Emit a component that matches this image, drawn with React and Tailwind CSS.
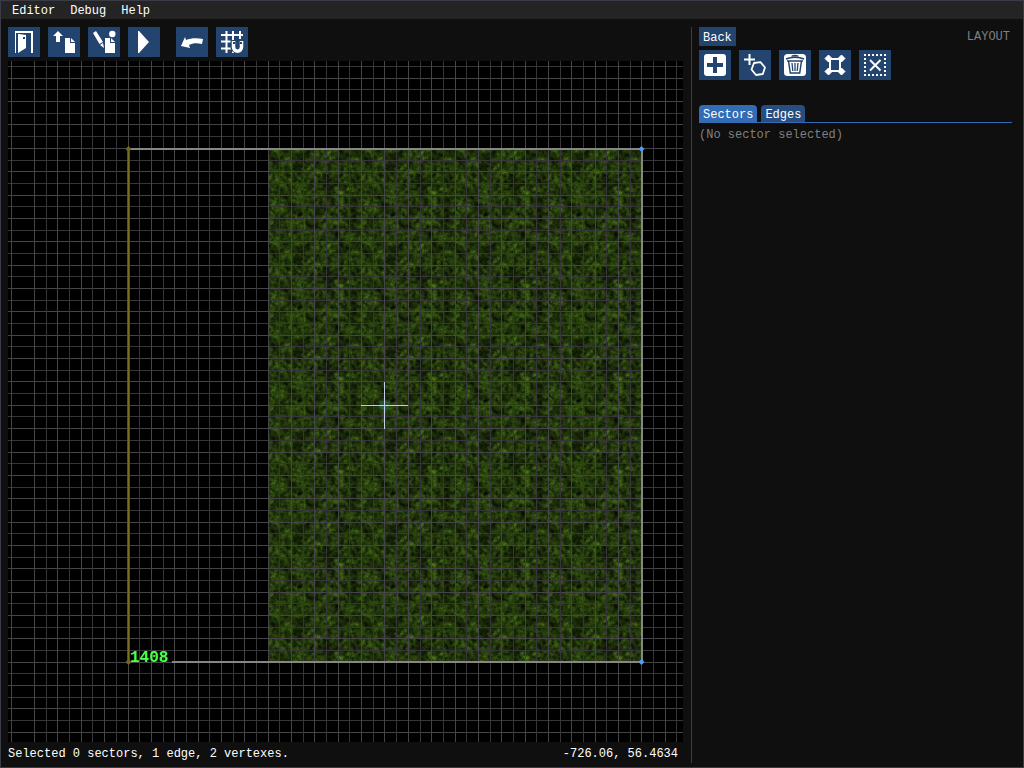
import React from "react";

const STEP = 11.68;
const CENTER_X = 376.98;
const CENTER_Y = 344.3;

const columns = Array.from({ length: 58 }, (_, i) => i - 32).filter((i) => i !== -31);
const rows = Array.from({ length: 58 }, (_, i) => i - 29);

const lineAt = (center, i) => Math.floor(center + i * STEP);
const lineColor = (i) => (i % 2 === 0 ? "#454547" : "#363638");

const icons = {
  exit: (
    <>
      <path d="M7 4h18v22h-2V6H8v20H7z" />
      <path d="M10 7h1l7 1v13l-8 5z" />
      <path d="M15 10h2v2h-2z" fill="#23446e" />
    </>
  ),
  open: (
    <>
      <path d="M10 4l5 5h-3v6H8V9H5z" />
      <path d="M17 11h5v5h5v10H17zM23 11l4 4h-4z" />
    </>
  ),
  edit: (
    <>
      <path d="M5 6l3-2 7 11-3.500 2zM12 18l3-2 1 5z" />
      <circle cx="24.300" cy="7" r="3.200" />
      <path d="M17 11h5v5h5v10H17zM23 11l4 4h-4z" />
    </>
  ),
  play: <path d="M10 4l1 0 10 11-10 11h-1z" />,
  undo: <path d="M5 19l4-9 1 3c5-2 11-2 17-1l-1 5c-5-1-9-1-13 1l1 3z" />,
  snap: (
    <>
      <path d="M9.500 4h2v22h-2zM16 4h2v10h-2zM23 4h2v8h-2zM5 7h22v2H5zM5 13.500h22v2H5zM5 20.500h10v2H5zM16 24h2v2h-2z" />
      <path d="M14.500 13h13v7c0 8-13 8-13 0z" fill="#23446e" />
      <path d="M17.500 14v6c0 5.500 8 5.500 8 0v-6" fill="none" stroke="#fff" strokeWidth="3.500" />
      <path d="M17 15h2v2h-2zM24 15h2v2h-2z" fill="#23446e" />
    </>
  ),
  add: (
    <>
      <rect x="5" y="4" width="22" height="22" rx="3" />
      <path d="M14 7h4v6h6v4h-6v6h-4v-6H8v-4h6z" fill="#23446e" />
    </>
  ),
  shape: (
    <>
      <path d="M9.500 4h2v4.500H16v2h-4.500V15h-2v-4.500H5v-2h4.500z" />
      <path d="M15 13l6.500-.8 4.500 5.300-2.200 6.500-6.800 1-4.500-5.500z" fill="none" stroke="#fff" strokeWidth="1.800" strokeLinejoin="round" />
    </>
  ),
  trash: (
    <>
      <rect x="5" y="4" width="22" height="22" rx="3.500" />
      <path d="M7 9c5-2.500 13-2.500 18 0M13 6.500c0-1.500 6-1.500 6 0M8 11h16M9.500 11l1.800 12h9.400l1.800-12" fill="none" stroke="#23446e" strokeWidth="1.500" />
      <path d="M13 13l.8 8M16 13v8M19 13l-.8 8" stroke="#23446e" strokeWidth="1.300" />
    </>
  ),
  vertices: (
    <>
      <path d="M11 9h10v12H11z" fill="none" stroke="#fff" strokeWidth="2" />
      <path d="M9.500 5l3.500 3.500-3.500 3.500L6 8.500zM22.500 5L26 8.500 22.500 12 19 8.500zM9.500 18l3.500 3.500L9.500 25 6 21.500zM22.500 18l3.500 3.500-3.500 3.500-3.500-3.500z" stroke="#fff" strokeWidth="1" strokeLinejoin="round" />
    </>
  ),
  deselect: (
    <>
      <path d="M5 5h22M5 25h22M6 4v22M26 4v22" fill="none" stroke="#fff" strokeWidth="2" strokeDasharray="2 2" shapeRendering="crispEdges" />
      <path d="M11 10l10.500 10.500M21.500 10L11 20.500" fill="none" stroke="#fff" strokeWidth="2" />
    </>
  ),
};

function ToolButton({ icon, label }) {
  return (
    <button type="button" aria-label={label} className="h-[30px] w-8 bg-[#23446e] hover:bg-[#4296fa]">
      <svg viewBox="0 0 32 30" className="block h-full w-full" fill="#fff" aria-hidden="true">
        {icons[icon]}
      </svg>
    </button>
  );
}

function MapCanvas() {
  return (
    <svg
      viewBox="0 0 675 681"
      preserveAspectRatio="xMidYMid slice"
      className="min-h-0 w-full flex-1 bg-black"
      role="img"
      aria-label="Level layout"
    >
      <defs>
        <filter id="grass" x="0" y="0" width="1" height="1" colorInterpolationFilters="sRGB">
          <feTurbulence type="fractalNoise" baseFrequency="0.24" numOctaves="3" seed="7" stitchTiles="stitch" />
          <feColorMatrix values="0.36 0.12 0 0 -0.07  0.46 0.26 0 0 -0.09  0.1 0 0.08 0 -0.03  0 0 0 0 1" />
        </filter>
        <filter id="patches" x="0" y="0" width="1" height="1" colorInterpolationFilters="sRGB">
          <feTurbulence type="fractalNoise" baseFrequency="0.075" numOctaves="3" seed="12" stitchTiles="stitch" />
          <feColorMatrix values="0 0 0 0 0  0 0 0 0 0  0 0 0 0 0  1.2 0 0 0 -0.38" />
        </filter>
        <pattern id="turf" width="93" height="93" x="260" y="88" patternUnits="userSpaceOnUse">
          <rect width="93" height="93" filter="url(#grass)" />
          <rect width="93" height="93" filter="url(#patches)" />
        </pattern>
      </defs>
      <rect x="260" y="88" width="374" height="513" fill="url(#turf)" />
      <g shapeRendering="crispEdges">
        {rows.map((i) => (
          <rect key={`r${i}`} x="0" y={lineAt(CENTER_Y, i)} width="675" height="1" fill={lineColor(i)} />
        ))}
        {columns.map((i) => (
          <rect key={`c${i}`} x={lineAt(CENTER_X, i)} y="0" width="1" height="681" fill={lineColor(i)} />
        ))}
        <path d="M120 87h514v2H120zM164 600h470v2H164zM633 87h2v514h-2z" fill="#868686" />
        <rect x="119" y="88" width="3" height="513" fill="#595216" />
        <rect x="120" y="88" width="1" height="513" fill="#7a7020" />
      </g>
      <path d="M120.500 85l3 3-3 3-3-3zM120.500 598l3 3-3 3-3-3z" fill="#706818" />
      <path d="M633.500 85l3 3-3 3-3-3zM633.500 598l3 3-3 3-3-3z" fill="#4b9eff" />
      <circle cx="376.500" cy="344.500" r="5" fill="#2a6656" opacity="0.7" />
      <path d="M353 344h47v1h-47zM376 321h1v47h-1z" fill="#c3cde8" shapeRendering="crispEdges" />
      <text
        x="122"
        y="601"
        fill="#4cff4c"
        className="font-['Liberation_Mono',monospace] text-[16px] font-bold"
      >
        1408
      </text>
    </svg>
  );
}

export default function App() {
  return (
    <div className="flex h-screen flex-col border border-[#3b3b45] bg-[#0f0f0f] font-['Liberation_Mono',monospace] text-[12px] leading-[14px] text-white">
      <nav className="flex h-[18px] shrink-0 items-center gap-[15px] bg-[#242424] px-[11px] pt-[2px]">
        <button type="button">Editor</button>
        <button type="button">Debug</button>
        <button type="button">Help</button>
      </nav>
      <div className="flex min-h-0 flex-1">
        <main className="flex min-w-0 flex-1 flex-col pt-2 pl-[7px]">
          <div className="mb-1 flex shrink-0 gap-2">
            <ToolButton icon="exit" label="Exit" />
            <ToolButton icon="open" label="Open file" />
            <ToolButton icon="edit" label="Edit properties" />
            <ToolButton icon="play" label="Play" />
            <span className="w-0" />
            <ToolButton icon="undo" label="Undo" />
            <ToolButton icon="snap" label="Snap to grid" />
          </div>
          <MapCanvas />
          <footer className="flex h-[25px] shrink-0 items-center justify-between pr-[5px] pb-[2px]">
            <span>Selected 0 sectors, 1 edge, 2 vertexes.</span>
            <span>-726.06, 56.4634</span>
          </footer>
        </main>
        <aside className="mt-2 mb-1 ml-2 w-[332px] shrink-0 border-l border-[#3b3b45] pr-[11px] pl-[7px]">
          <div className="flex justify-between">
            <button type="button" className="h-[19px] bg-[#23446e] px-1 pt-[2px]">Back</button>
            <h1 className="pt-[3px] pr-[2px] text-[#808080]">LAYOUT</h1>
          </div>
          <div className="mt-1 flex gap-2">
            <ToolButton icon="add" label="Add" />
            <ToolButton icon="shape" label="Add shape" />
            <ToolButton icon="trash" label="Delete" />
            <ToolButton icon="vertices" label="Select vertices" />
            <ToolButton icon="deselect" label="Deselect" />
          </div>
          <div role="tablist" className="mt-[25px] flex gap-1 border-b border-[#336cb4]">
            <button type="button" role="tab" aria-selected="true" className="h-[17px] rounded-t bg-[#336cb4] px-1 pt-[2px]">Sectors</button>
            <button type="button" role="tab" aria-selected="false" className="h-[17px] rounded-t bg-[#284d80] px-1 pt-[2px]">Edges</button>
          </div>
          <p className="pt-[5px] text-[#808080]">(No sector selected)</p>
        </aside>
      </div>
    </div>
  );
}
